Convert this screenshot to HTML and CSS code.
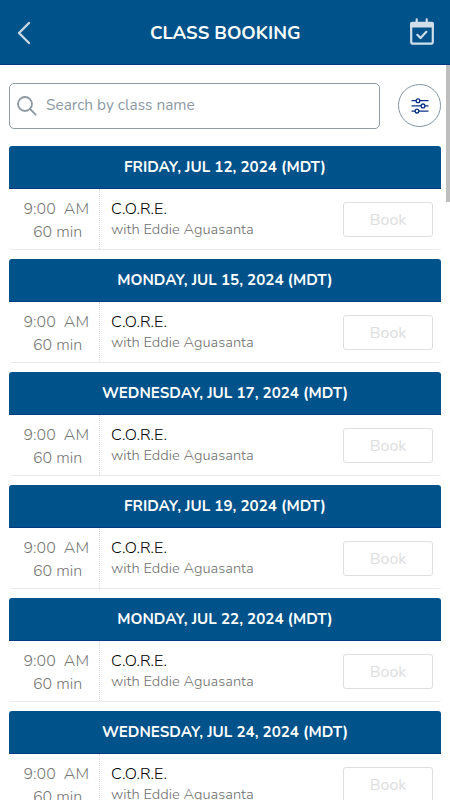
FILE: index.html
```html
<!DOCTYPE html>
<html lang="en">
<head>
<meta charset="utf-8">
<title>Class Booking</title>
<link rel="stylesheet" href="styles.css">
</head>
<body>
<header class="topbar">
  <svg class="back" viewBox="0 0 14 24"><path d="M12 2 2 12l10 10"/></svg>
  <h1>CLASS BOOKING</h1>
  <svg class="calendar" viewBox="0 0 24 27"><rect x="1.200" y="5" width="21.600" height="20.700" rx="2"/><path class="solid" d="M0 9.500V6q0-2.200 2.200-2.200h19.600q2.200 0 2.200 2.200v3.500z"/><path d="M6.700 1.400V5M16.700 1.400V5"/><path d="m7.300 16.800 3.200 3.200 5.900-6.200"/></svg>
</header>
<main class="content">
  <div class="tools">
    <div class="search">
      <svg viewBox="0 0 20 20"><circle cx="8" cy="8" r="7"/><path d="m13 13 5.700 5.700"/></svg>
      <span>Search by class name</span>
    </div>
    <div class="filter">
      <svg viewBox="0 0 16 16"><path d="M0 2.700h4M8 2.700h8M0 7.900h9M13 7.900h3M0 13.100h3M7 13.100h9"/><circle cx="6" cy="2.700" r="1.900"/><circle cx="11" cy="7.900" r="1.900"/><circle cx="5" cy="13.100" r="1.900"/></svg>
    </div>
  </div>
  <section class="day"><h2>FRIDAY, JUL 12, 2024 (MDT)</h2><div class="row"><div class="time"><span class="clock">9:00&nbsp; AM</span><span class="length">60 min</span></div><div class="info"><span class="name">C.O.R.E.</span><span class="coach">with Eddie Aguasanta</span></div><div class="book">Book</div></div></section>
  <section class="day"><h2>MONDAY, JUL 15, 2024 (MDT)</h2><div class="row"><div class="time"><span class="clock">9:00&nbsp; AM</span><span class="length">60 min</span></div><div class="info"><span class="name">C.O.R.E.</span><span class="coach">with Eddie Aguasanta</span></div><div class="book">Book</div></div></section>
  <section class="day"><h2>WEDNESDAY, JUL 17, 2024 (MDT)</h2><div class="row"><div class="time"><span class="clock">9:00&nbsp; AM</span><span class="length">60 min</span></div><div class="info"><span class="name">C.O.R.E.</span><span class="coach">with Eddie Aguasanta</span></div><div class="book">Book</div></div></section>
  <section class="day"><h2>FRIDAY, JUL 19, 2024 (MDT)</h2><div class="row"><div class="time"><span class="clock">9:00&nbsp; AM</span><span class="length">60 min</span></div><div class="info"><span class="name">C.O.R.E.</span><span class="coach">with Eddie Aguasanta</span></div><div class="book">Book</div></div></section>
  <section class="day"><h2>MONDAY, JUL 22, 2024 (MDT)</h2><div class="row"><div class="time"><span class="clock">9:00&nbsp; AM</span><span class="length">60 min</span></div><div class="info"><span class="name">C.O.R.E.</span><span class="coach">with Eddie Aguasanta</span></div><div class="book">Book</div></div></section>
  <section class="day"><h2>WEDNESDAY, JUL 24, 2024 (MDT)</h2><div class="row"><div class="time"><span class="clock">9:00&nbsp; AM</span><span class="length">60 min</span></div><div class="info"><span class="name">C.O.R.E.</span><span class="coach">with Eddie Aguasanta</span></div><div class="book">Book</div></div></section>
</main>
<div class="scrollbar"></div>
</body>
</html>
```
FILE: styles.css
```css
* { box-sizing: border-box; }
html, body { height: 800px; overflow: hidden; }
body { margin: 0; background: #fff; font-family: Nunito, Lato, "Open Sans", sans-serif; }
h1, h2 { margin: 0; white-space: nowrap; }
svg { fill: none; stroke-linecap: round; stroke-linejoin: round; }

.topbar { height: 65px; background: #00528a; border-bottom: 1px solid #003580; display: flex; align-items: center; justify-content: space-between; padding: 0 17px 0 17px; }
.back { width: 14px; height: 24px; stroke: #c5d8e6; stroke-width: 2.4; margin-top: 1px; }
.calendar { width: 24px; height: 27px; margin: -1px -0.5px 0 0; stroke: #d0dfea; stroke-width: 2.2; }
h1 { color: #fff; font-size: 18.4px; font-weight: 700; line-height: 24px; margin: 2px 0 0 10px; }
.calendar .solid { fill: #d0dfea; stroke: none; }

.content { padding: 17px 9px 0; }
.tools { display: flex; justify-content: space-between; align-items: center; height: 47px; margin-bottom: 17px; }
.search { width: 371px; height: 46px; border: 1px solid #8f9ca4; border-radius: 5px; display: flex; align-items: center; padding-left: 7px; color: #8c9aa3; font-size: 15.4px; }
.search svg { width: 20px; height: 20px; margin-right: 9px; stroke: #8c9aa3; stroke-width: 1.8; }
.search span { padding-bottom: 2px; }
.filter { width: 43px; height: 43px; border: 1px solid #8395a2; border-radius: 50%; display: flex; align-items: center; justify-content: center; }
.filter svg { width: 16px; height: 16px; stroke: #0c3187; stroke-width: 1.3; overflow: visible; }

.day { height: 104px; margin-bottom: 9px; border-bottom: 1px solid #e7ebec; border-radius: 3px; }
h2 { height: 43px; background: #00528a; border-bottom: 1px solid #003a80; border-radius: 3px 3px 0 0; color: #fff; font-size: 15.2px; font-weight: 700; line-height: 42px; text-align: center; }
.row { display: flex; height: 60px; padding-right: 8px; }
.time { width: 91px; border-right: 1px dotted #d9d9d9; display: flex; flex-direction: column; padding-top: 9px; color: #777; font-size: 16px; font-weight: 300; line-height: 23px; white-space: nowrap; }
.clock { margin-left: 14.5px; }
.length { margin-left: 24px; }
.info { flex: 1; padding: 10px 0 0 11px; display: flex; flex-direction: column; }
.name { color: #000; font-size: 16px; font-weight: 300; line-height: 20px; }
.coach { color: #707070; font-size: 14.7px; font-weight: 300; line-height: 20px; }
.book { width: 90px; height: 35px; margin-top: 13px; border: 1px solid #dedede; border-radius: 3px; color: #dedede; font-size: 16px; line-height: 34px; text-align: center; }
.scrollbar { position: absolute; right: 0; top: 65px; width: 4px; height: 137px; background: #bebebe; }
```
